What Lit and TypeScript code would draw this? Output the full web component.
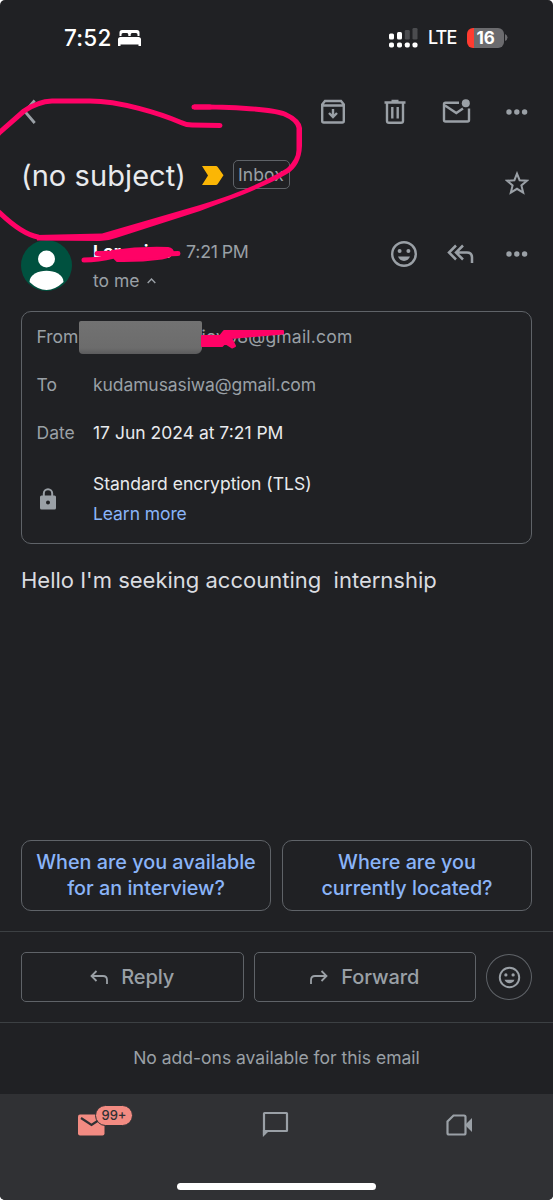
import { LitElement, html, css, svg } from "lit";
import { customElement } from "lit/decorators.js";

const face = svg`<circle cx="14" cy="14" r="11.8" fill="none" stroke="currentColor" stroke-width="2.4"/><circle cx="9.6" cy="10.9" r="2" fill="currentColor"/><circle cx="18.4" cy="10.9" r="2" fill="currentColor"/><path d="M8 16.6h12c-1 2.6-3.200 4.300-6 4.300s-5-1.700-6-4.300z" fill="currentColor"/>`;
const dots = html`<svg class="ic" width="22" height="6" viewBox="0 0 22 6"><g fill="currentColor"><circle cx="3" cy="3" r="2.700"/><circle cx="10.800" cy="3" r="2.700"/><circle cx="18.600" cy="3" r="2.700"/></g></svg>`;

@customElement("app-root")
export class AppRoot extends LitElement {
  static styles = css`
    :host { display: block; background: #fff; }
    * { box-sizing: border-box; }
    svg { display: block; flex: none; }
    .phone { position: relative; width: 553px; height: 1200px; overflow: hidden; border-radius: 5px; background: #202124; color: #9aa0a6; font-family: Inter, "Noto Sans", sans-serif; display: flex; flex-direction: column; white-space: nowrap; }
    .status { height: 80px; padding: 0 45px 5px 64px; display: flex; align-items: center; color: #fff; flex: none; }
    .time { font-size: 22.5px; font-weight: 500; width: 53px; letter-spacing: 0.2px; }
    .lte { font-size: 18px; font-weight: 500; margin: 0 11px 0 10px; letter-spacing: -0.9px; width: 28px; }
    .push { margin-left: auto; }
    .battery { width: 37px; height: 20px; border-radius: 6px; background: linear-gradient(90deg, #ff3b30 7px, #6b6b6e 7px); font-size: 17px; line-height: 20px; font-weight: 700; text-align: center; letter-spacing: -0.3px; }
    .tip { margin-left: 1px; }
    .toolbar { height: 64px; display: flex; align-items: center; padding: 0 25px 0 23px; flex: none; }
    .toolbar .archive { margin-left: auto; }
    .trash { margin-left: 39px; }
    .unread { margin-left: 36px; }
    .toolbar .more { margin-left: 35px; }
    .subject { height: 96px; display: flex; padding: 14px 24px 0 21px; align-items: flex-start; flex: none; }
    h1 { margin: 0; font-weight: 400; font-size: 29px; line-height: 36px; width: 180.5px; color: #e8eaed; letter-spacing: 0.08px; }
    .important { margin-top: 8px; }
    .label { margin: 2px 0 0 9px; width: 57px; height: 29px; border: 1px solid #5f6368; border-radius: 5px; font-size: 17.5px; line-height: 28px; text-align: center; letter-spacing: 0.1px; }
    .star { margin: 13px 0 0 auto; }
    .sender { height: 71px; display: flex; padding-right: 25px; padding-left: 21px; flex: none; }
    .avatar { margin-right: 21px; }
    .who { display: flex; flex-direction: column; }
    .name { height: 23px; display: flex; line-height: 23px; font-size: 17.5px; }
    .name b { width: 93px; color: #fff; font-weight: 700; display: flex; }
    .name .i { margin-left: 23px; }
    .name .e { margin-left: 13px; }
    .stamp { letter-spacing: -0.2px; word-spacing: -1px; font-size: 17.8px; }
    .tome { display: flex; align-items: center; gap: 7px; font-size: 17.500px; line-height: 22px; margin-top: 7px; }
    .acts { margin-left: auto; height: 28px; display: flex; align-items: center; }
    .replyall { margin: 0 32px 0 29px; }
    .card { margin: 0 21px 0 21px; height: 233px; border: 1px solid #5f6368; border-radius: 10px; padding: 14px 0 0 14.5px; flex: none; font-size: 17.5px; }
    .row { display: flex; height: 22px; line-height: 22px; margin-bottom: 26px; }
    .k { width: 56.5px; }
    .from { width: 42.5px; }
    .addr { letter-spacing: 0.2px; }
    .to { letter-spacing: -0.09px; }
    .smudge { width: 122.5px; height: 33px; margin-top: -5px; background: linear-gradient(#727272, #6c6c6c 82%, #5b5b5d); border-radius: 2px 2px 6px 4px; }
    .bright { color: #e8eaed; }
    .enc { display: flex; align-items: center; margin-top: 29px; height: 52px; }
    .lock { width: 56.5px; padding-left: 3px; padding-bottom: 1px; }
    .enc p { margin: 0; line-height: 22px; }
    .enc .learn { margin-top: 8px; color: #8ab4f8; letter-spacing: -0.08px; }
    .body { margin: 23px 0 0 21px; font-size: 22px; line-height: 26px; color: #dadce0; white-space: pre; height: 273px; flex: none; }
    .chips { display: grid; grid-template-columns: 1fr 1fr; gap: 11px; padding: 0 21px; height: 71px; margin-bottom: 20px; flex: none; }
    .chip { border: 1px solid #5f6368; border-radius: 10px; text-align: center; font-size: 19.800px; line-height: 26px; font-weight: 500; color: #8ab4f8; padding-top: 8px; }
    .bar { height: 92px; border: solid #3c4043; border-width: 1px 0; padding: 20px 21px; display: flex; gap: 10px; align-items: center; flex: none; }
    .btn { width: 223px; height: 50px; border: 1px solid #5f6368; border-radius: 5px; display: flex; align-items: center; justify-content: center; font-size: 20px; font-weight: 500; gap: 13px; }
    .btn span { letter-spacing: -0.1px; }
    .round { width: 46px; height: 46px; border: 1px solid #5f6368; border-radius: 50%; display: flex; align-items: center; justify-content: center; }
    .addons { height: 71px; line-height: 70px; text-align: center; font-size: 17.500px; flex: none; }
    .nav { flex: 1; background: #303134; display: flex; position: relative; }
    .mail { position: relative; margin: 20px 0 0 78px; width: 55px; height: 24px; }
    .badge { position: absolute; left: 17px; top: -9px; width: 38px; height: 21px; border: 1px solid #303134; border-radius: 11px; background: #f28b82; color: #303134; font-size: 13px; line-height: 19px; font-weight: 500; text-align: center; }
    .chat { margin: 17px 0 0 129px; }
    .meet { margin: 20px 0 0 157px; }
    .home { position: absolute; left: 177px; bottom: 10px; width: 199px; height: 7px; border-radius: 4px; background: #fff; }
    .ink { position: absolute; inset: 0; }
  `;

  render() {
    return html`<div class="phone">
      <div class="status">
        <span class="time">7:52</span>
        <svg width="25" height="18" viewBox="0 0 25 18" fill="#fff"><path d="M2.500 7V3.500Q2.500 1 5 1h15q2.500 0 2.500 2.500V7h-2V5.500q0-1.500-1.500-1.500h-4q-1.300 0-1.300 1.500V7h-2.400V5.500Q11.300 4 10 4H6Q4.500 4 4.500 5.500V7zM1 10.500Q1 8 3.500 8h18Q24 8 24 10.500V17h-2.500v-1.500h-18V17H1z"/></svg>
        <svg class="push" width="29" height="20" viewBox="0 0 29 20"><g fill="#fff"><rect y="5.500" width="5" height="6" rx="1.500"/><rect x="8" y="4" width="5" height="7.500" rx="1.500"/><rect y="14.500" width="5" height="5" rx="1.800"/><rect x="8" y="14.500" width="5" height="5" rx="1.800"/><rect x="15.800" y="14.500" width="5" height="5" rx="1.800"/><rect x="23.500" y="14.500" width="5" height="5" rx="1.800"/></g><g fill="#4b4c4f"><rect x="15.800" y="2" width="5" height="9.500" rx="1.300"/><rect x="23.500" y="0" width="5" height="11.500" rx="1.300"/></g></svg>
        <span class="lte">LTE</span><span class="battery">16</span>
        <svg class="tip" width="3" height="7" viewBox="0 0 3 7"><path d="M0 0q2.500 1 2.500 3.500T0 7z" fill="#6b6b6e"/></svg>
      </div>
      <div class="toolbar">
        <svg width="13" height="26" viewBox="0 0 13 26" fill="none" stroke="currentColor" stroke-width="2.800"><path d="M11.700 1.500 1.800 12.500 11.700 24"/></svg>
        <svg class="archive" width="24" height="26" viewBox="0 0 24 26" fill="none" stroke="currentColor" stroke-width="2.400"><path d="M1.200 5.500 4 2h16l2.800 3.500V22q0 1.500-1.500 1.500H2.700q-1.500 0-1.500-1.500zM1.200 6.500h21.600M12 10v8M8 14l4 4 4-4"/></svg>
        <svg class="trash" width="22" height="26" viewBox="0 0 22 26" fill="none" stroke="currentColor" stroke-width="2.400"><path d="M.500 3.500h21M7.500 2h7M3 4v18Q3 23.800 5 23.800h12q2 0 2-1.800V4M8.300 8v11.500M13.700 8v11.500"/></svg>
        <svg class="unread" width="29" height="26" viewBox="0 0 29 26" fill="none" stroke="currentColor" stroke-width="2.400"><path d="M17 3.700H3.500Q2 3.700 2 5.200V21q0 1.500 1.500 1.500h22Q27 22.500 27 21V9.500M3 6.500l11.300 7.500L21 9.500"/><circle cx="23.800" cy="4.200" r="4" fill="currentColor" stroke="none"/></svg>
        <span class="more">${dots}</span>
      </div>
      <div class="subject">
        <h1>(no subject)</h1>
        <svg class="important" width="22" height="19" viewBox="0 0 22 19"><path d="M0 0h14q1 0 1.700 1L21.500 9.300 15.700 18q-.700 1-1.700 1H0l6-9.500z" fill="#fbb605"/></svg>
        <span class="label">Inbox</span>
        <svg class="star" width="24" height="25" viewBox="0 0 24 25" fill="none" stroke="currentColor" stroke-width="2"><path d="M12 2.600l2.600 6.600 7.400.500-5.600 4.700 1.800 7.300-6.200-3.900-6.200 3.900 1.800-7.300L2 9.700l7.400-.500z"/></svg>
      </div>
      <div class="sender">
        <svg class="avatar" width="51" height="51" viewBox="0 0 51 51"><circle cx="25.500" cy="25.500" r="25.500" fill="#00513f"/><g fill="#fff"><circle cx="25.500" cy="19" r="8.500"/><path d="M8.500 42C9 27 42 27 42.500 42Q34 50 25.500 50T8.500 42z"/></g></svg>
        <div class="who">
          <div class="name"><b><span>Lor</span><span class="i">i</span><span class="e">e</span></b><span class="stamp">7:21 PM</span></div>
          <div class="tome">to me <svg width="9" height="6" viewBox="0 0 9 6" fill="none" stroke="currentColor" stroke-width="1.400"><path d="M.700 5 4.500 1 8.300 5"/></svg></div>
        </div>
        <div class="acts">
          <svg width="28" height="28" viewBox="0 0 28 28">${face}</svg>
          <svg class="replyall" width="27" height="20" viewBox="0 0 27 20" fill="none" stroke="currentColor" stroke-width="2.500"><path d="M9 1.500 2 8.500l7 7M16 1.500 9 8.500l7 7M9.500 8.500H20q5 0 5 5V19"/></svg>
          ${dots}
        </div>
      </div>
      <div class="card">
        <div class="row"><span class="from">From</span><span class="smudge"></span><span class="addr">iev08@gmail.com</span></div>
        <div class="row"><span class="k">To</span><span class="to">kudamusasiwa@gmail.com</span></div>
        <div class="row"><span class="k">Date</span><span class="bright date">17 Jun 2024 at 7:21 PM</span></div>
        <div class="enc">
          <span class="lock"><svg width="16" height="22" viewBox="0 0 16 22"><path d="M3.800 8V5.500a4.200 4.200 0 0 1 8.400 0V8" fill="none" stroke="currentColor" stroke-width="2"/><path fill-rule="evenodd" fill="currentColor" d="M1.500 7.500h13q1.500 0 1.500 1.500v11q0 1.500-1.500 1.500h-13Q0 21.500 0 20V9q0-1.500 1.500-1.500zM8 12.500a2 2 0 1 0 0 4 2 2 0 0 0 0-4z"/></svg></span>
          <div><p class="bright std">Standard encryption (TLS)</p><p class="learn">Learn more</p></div>
        </div>
      </div>
      <div class="body">Hello I'm seeking accounting  internship</div>
      <div class="chips"><div class="chip">When are you available<br>for an interview?</div><div class="chip">Where are you<br>currently located?</div></div>
      <div class="bar">
        <div class="btn"><svg width="18" height="15" viewBox="0 0 18 15" fill="none" stroke="currentColor" stroke-width="1.800"><path d="M6.500 1 1.500 6l5 5M1.500 6H13q4 0 4 4v4"/></svg><span>Reply</span></div>
        <div class="btn"><svg width="18" height="15" viewBox="0 0 18 15" fill="none" stroke="currentColor" stroke-width="1.800"><path d="M11.500 1l5 5-5 5M16.500 6H5Q1 6 1 10v4"/></svg><span>Forward</span></div>
        <div class="round"><svg width="23" height="23" viewBox="0 0 28 28">${face}</svg></div>
      </div>
      <div class="addons">No add-ons available for this email</div>
      <div class="nav">
        <div class="mail"><svg width="27" height="22" viewBox="0 0 27 22"><rect y=".500" width="26.500" height="21" rx="2" fill="#f28b82"/><path d="M3 4l10.500 7L24 4" fill="none" stroke="#303134" stroke-width="2.200"/></svg><span class="badge">99+</span></div>
        <svg class="chat" width="27" height="27" viewBox="0 0 27 27"><path d="M2 24V2.500Q2 2 2.500 2h22q.500 0 .500.500v17q0 .500-.500.500H5" fill="none" stroke="currentColor" stroke-width="2.200"/><path d="M.900 26V19H8z" fill="currentColor"/></svg>
        <svg class="meet" width="27" height="22" viewBox="0 0 27 22"><path d="M7.500 1.500H18q1.500 0 1.500 1.500v16q0 1.500-1.500 1.500H3q-1.500 0-1.500-1.500V7.500z" fill="none" stroke="currentColor" stroke-width="2.200"/><path d="M19 11l7-7v14z" fill="currentColor"/></svg>
        <span class="home"></span>
      </div>
      <svg class="ink" width="553" height="1200" viewBox="0 0 553 1200" fill="none" stroke="#ff0266" stroke-linecap="round" stroke-linejoin="round">
        <path stroke-width="5" d="M220 125.500 192 125Q186 125 181 122.500C160 113.500 120 101 90 101H52Q38 101.500 24 111L0 132Q-14 146-16 172T0 213Q22 234 38 237"/>
        <path fill="#ff0266" stroke="none" d="M36 235 102 233.500 200 205C240 193 270 179 287 168Q296.500 159 296.500 150V128Q295 121 283 116C270 111 222 109 194 109.500V104.500C222 104 272 106 286 112Q301 119 302 128V146Q301 166 287 174C262 188 240 196 200 211L116 238Q108 241 100 241L37 240.500z"/>
        <path stroke-width="5" d="M194 107H210"/>
        <path stroke-width="5" d="M84 260Q98 260 114 256L178 253.500M97 253.500 130 253"/>
        <path fill="#ff0266" stroke="#ff0266" stroke-width="2" d="M112 251Q140 247 168 248Q173 249 173 253Q171 257 162 258.500Q140 261.500 117 261Q114 259 114 257z"/>
        <path fill="#ff0266" stroke="#ff0266" stroke-width="2" d="M202 336H220L224 331 283 331V333.500L231 338 235 346 232 347.500 225 343 222 346H202z"/>
      </svg>
    </div>`;
  }
}
